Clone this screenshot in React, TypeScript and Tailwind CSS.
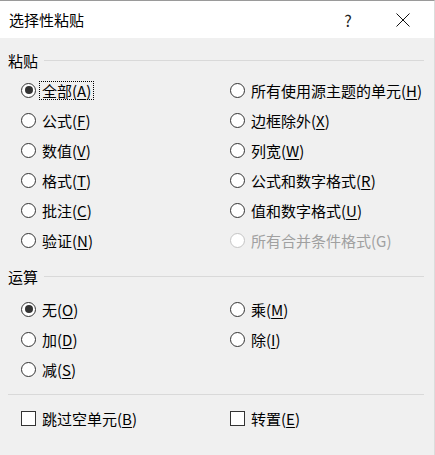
import React from 'react';

type Opt = { label: string; key: string; checked?: boolean; disabled?: boolean; focused?: boolean };

const pasteLeft: Opt[] = [
  { label: '全部', key: 'A', checked: true, focused: true },
  { label: '公式', key: 'F' },
  { label: '数值', key: 'V' },
  { label: '格式', key: 'T' },
  { label: '批注', key: 'C' },
  { label: '验证', key: 'N' },
];

const pasteRight: Opt[] = [
  { label: '所有使用源主题的单元', key: 'H' },
  { label: '边框除外', key: 'X' },
  { label: '列宽', key: 'W' },
  { label: '公式和数字格式', key: 'R' },
  { label: '值和数字格式', key: 'U' },
  { label: '所有合并条件格式', key: 'G', disabled: true },
];

const opLeft: Opt[] = [
  { label: '无', key: 'O', checked: true },
  { label: '加', key: 'D' },
  { label: '减', key: 'S' },
];

const opRight: Opt[] = [
  { label: '乘', key: 'M' },
  { label: '除', key: 'I' },
];

function Label({ opt }: { opt: Opt }) {
  const text = (
    <span className={opt.disabled ? 'text-[#a0a0a0]' : 'text-[#000]'}>
      {opt.label}(
      {opt.disabled ? opt.key : <span className="underline underline-offset-2">{opt.key}</span>})
    </span>
  );
  if (opt.focused) {
    return <span className="border border-dotted border-black px-[2px] py-[1px] -ml-[3px]">{text}</span>;
  }
  return text;
}

function Radio({ opt }: { opt: Opt }) {
  return (
    <div className="flex items-center h-[30px] gap-[6px]">
      <span
        className={
          'w-[15px] h-[15px] rounded-full border flex items-center justify-center bg-white shrink-0 ' +
          (opt.disabled ? 'border-[#c4c4c4] bg-[#f0f0f0]' : 'border-[#333]')
        }
      >
        {opt.checked && <span className="w-[8px] h-[8px] rounded-full bg-[#333]" />}
      </span>
      <Label opt={opt} />
    </div>
  );
}

function Check({ label, k }: { label: string; k: string }) {
  return (
    <div className="flex items-center h-[30px] gap-[6px]">
      <span className="w-[15px] h-[15px] border border-[#333] bg-white shrink-0" />
      <span>
        {label}(<span className="underline underline-offset-2">{k}</span>)
      </span>
    </div>
  );
}

function GroupHeader({ title }: { title: string }) {
  return (
    <div className="flex items-center h-[22px] pl-[8px] pr-[10px] gap-[6px]">
      <span>{title}</span>
      <div className="flex-1 h-px bg-[#d9d9d9]" />
    </div>
  );
}

export default function App() {
  return (
    <div
      className="w-[435px] h-[455px] bg-[#f0f0f0] border-t border-[#9a9a9a] border-r border-r-[#dcdcdc] text-[15px] leading-none text-black overflow-hidden"
      style={{ fontFamily: '"Noto Sans CJK SC", "Noto Sans", sans-serif' }}
    >
      {/* Title bar */}
      <div className="h-[37px] bg-white flex items-center pl-[9px]">
        <span className="flex-1">选择性粘贴</span>
        <span className="w-[26px] text-center text-[16px] text-[#222] mr-[35px]">?</span>
        <svg width="14" height="14" viewBox="0 0 14 14" className="mr-[24px]">
          <path d="M0.5 0.5 L13.5 13.5 M13.5 0.5 L0.5 13.5" stroke="#111" strokeWidth="1" />
        </svg>
      </div>

      {/* Paste group */}
      <div className="mt-[11px]">
        <GroupHeader title="粘贴" />
      </div>
      <div className="mt-[4px] grid grid-cols-[209px_1fr] pl-[21px]">
        <div className="flex flex-col">
          {pasteLeft.map((o) => (
            <Radio key={o.key} opt={o} />
          ))}
        </div>
        <div className="flex flex-col">
          {pasteRight.map((o) => (
            <Radio key={o.key} opt={o} />
          ))}
        </div>
      </div>

      {/* Operation group */}
      <div className="mt-[10px]">
        <GroupHeader title="运算" />
      </div>
      <div className="mt-[7px] grid grid-cols-[209px_1fr] pl-[21px]">
        <div className="flex flex-col">
          {opLeft.map((o) => (
            <Radio key={o.key} opt={o} />
          ))}
        </div>
        <div className="flex flex-col">
          {opRight.map((o) => (
            <Radio key={o.key} opt={o} />
          ))}
        </div>
      </div>

      <div className="mt-[10px] mx-[8px] h-px bg-[#d9d9d9] mr-[10px]" />

      <div className="mt-[8px] grid grid-cols-[209px_1fr] pl-[21px]">
        <Check label="跳过空单元" k="B" />
        <Check label="转置" k="E" />
      </div>
    </div>
  );
}
